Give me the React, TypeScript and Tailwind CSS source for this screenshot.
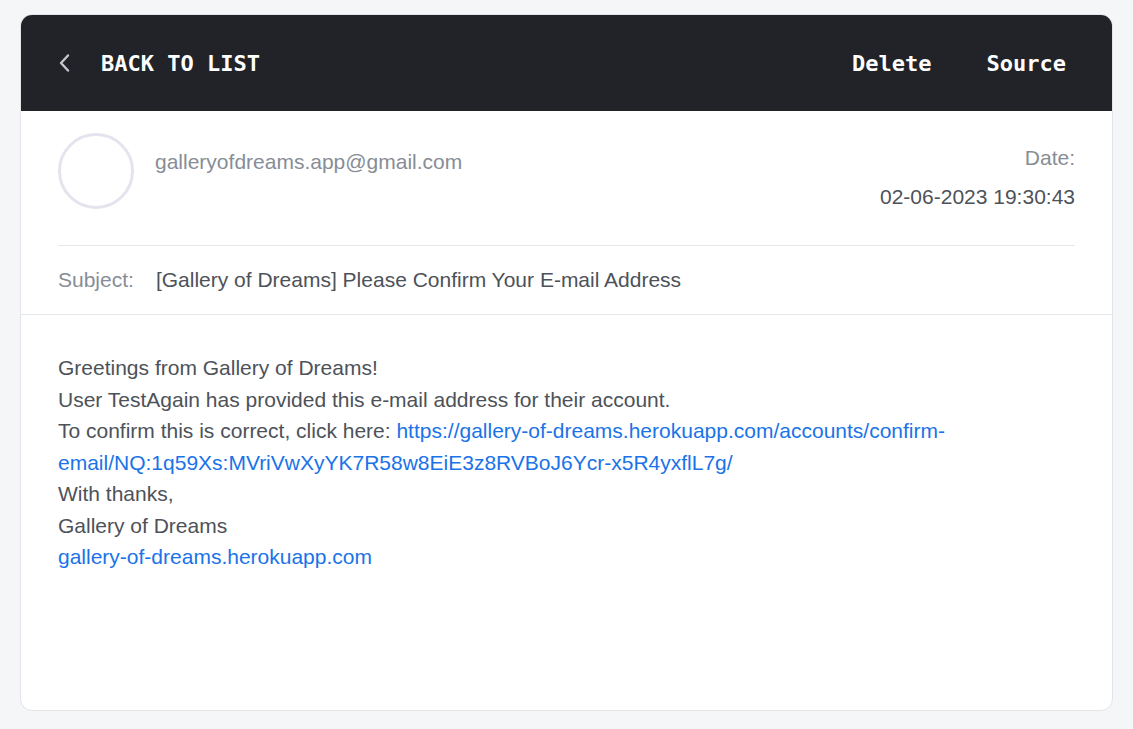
const sans = { fontFamily: '"Liberation Sans", Arial, sans-serif' };

const EmailView = () => {
  return (
    <div className="min-h-screen bg-[#f5f6f8] px-5 pt-[14px] pb-[18px]" style={sans}>
      <div className="flex h-[697px] flex-col overflow-hidden rounded-[12px] border border-[#e3e4e8] bg-white">
        <div className="flex h-[96px] shrink-0 items-center justify-between bg-[#212329] pl-[37px] pr-[46px] font-['DejaVu_Sans_Mono',monospace] text-[22px] font-bold text-white">
          <button type="button" className="flex items-center gap-[31px]">
            <svg width="12" height="20" viewBox="0 0 12 20" fill="none">
              <path d="M10 2.5 L3 10 L10 17.5" stroke="#c4c6cc" strokeWidth="2.4" strokeLinecap="round" strokeLinejoin="round" />
            </svg>
            <span>BACK TO LIST</span>
          </button>
          <div className="flex items-center gap-[55px]">
            <button type="button">Delete</button>
            <button type="button">Source</button>
          </div>
        </div>

        <div className="px-[37px]">
          <div className="flex items-start justify-between border-b border-[#e6e7ea] pt-[22px] pb-[36px]">
            <div className="flex items-start gap-[21px]">
              <div className="h-[76px] w-[76px] rounded-full border-[3px] border-[#e4e4ee]" />
              <div className="pt-[17px] text-[21px] leading-[24px] text-[#878d96]">galleryofdreams.app@gmail.com</div>
            </div>
            <div className="pt-[13px] text-right text-[21px]">
              <div className="leading-[24px] text-[#878d96]">Date:</div>
              <div className="mt-[15px] leading-[24px] text-[#4d5259]">02-06-2023 19:30:43</div>
            </div>
          </div>
          <div className="flex h-[68px] items-center gap-[22px] text-[21px]">
            <span className="text-[#878d96]">Subject:</span>
            <span className="text-[#4d5259]">[Gallery of Dreams] Please Confirm Your E-mail Address</span>
          </div>
        </div>

        <div className="border-t border-[#e6e7ea] px-[37px] pt-[37px] text-[21px] leading-[31.5px] text-[#4d5259]">
          <div>Greetings from Gallery of Dreams!</div>
          <div>User TestAgain has provided this e-mail address for their account.</div>
          <div>
            To confirm this is correct, click here:{" "}
            <a className="text-[#1a73e8]" href="#">
              https://gallery-of-dreams.herokuapp.com/accounts/confirm-email/NQ:1q59Xs:MVriVwXyYK7R58w8EiE3z8RVBoJ6Ycr-x5R4yxflL7g/
            </a>
          </div>
          <div>With thanks,</div>
          <div>Gallery of Dreams</div>
          <a className="text-[#1a73e8]" href="#">
            gallery-of-dreams.herokuapp.com
          </a>
        </div>
      </div>
    </div>
  );
};

export default function App() {
  return <EmailView />;
}
